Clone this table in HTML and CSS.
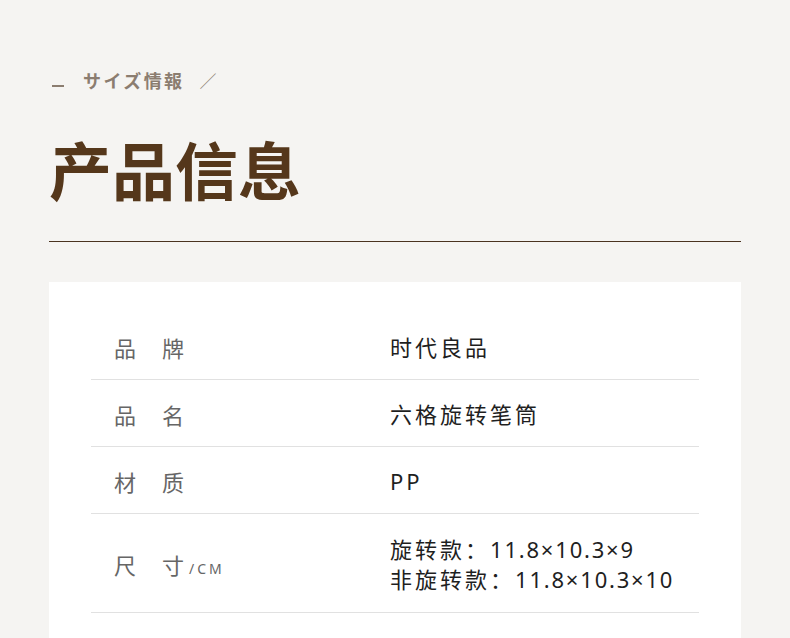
FILE: index.html
```html
<!DOCTYPE html>
<html lang="zh">
<head>
<meta charset="utf-8">
<link rel="stylesheet" href="styles.css">
</head>
<body>
<div class="page">
  <div class="kicker"><span class="dash"></span><span class="kicker-text">サイズ情報</span><span class="slash">／</span></div>
  <h1 class="title">产品信息</h1>
  <div class="rule"></div>
  <div class="card">
    <div class="row"><div class="label"><span>品</span><span>牌</span></div><div class="value">时代良品</div></div>
    <div class="row"><div class="label"><span>品</span><span>名</span></div><div class="value">六格旋转笔筒</div></div>
    <div class="row"><div class="label"><span>材</span><span>质</span></div><div class="value">PP</div></div>
    <div class="row tall"><div class="label"><span>尺</span><span>寸</span><span class="unit">/CM</span></div><div class="value"><div>旋转款：<span class="num">11.8×10.3×9</span></div><div>非旋转款：<span class="num">11.8×10.3×10</span></div></div></div>
  </div>
</div>
</body>
</html>
```
FILE: styles.css
```css
html, body { margin: 0; padding: 0; }
body {
  background: #f5f4f2;
  font-family: "Noto Sans CJK SC", "Noto Sans", sans-serif;
  width: 790px;
  height: 638px;
  overflow: hidden;
}
.page { padding: 0 49px; }
.kicker {
  display: flex;
  align-items: center;
  height: 30px;
  margin-top: 65px;
  color: #8b7d70;
}
.dash {
  display: inline-block;
  width: 12px;
  height: 2px;
  background: #8b7d70;
  margin: 12px 0 0 3px;
}
.kicker-text {
  font-size: 18px;
  font-weight: 700;
  letter-spacing: 2.4px;
  margin-left: 19px;
}
.slash {
  font-size: 17px;
  font-weight: 300;
  margin-left: 15px;
}
.title {
  margin: 30px 0 0 0;
  font-size: 63px;
  line-height: 86px;
  font-weight: 700;
  color: #55371b;
  letter-spacing: 0;
}
.rule {
  margin-top: 30px;
  height: 1px;
  background: #4a3320;
}
.card {
  margin-top: 40px;
  background: #fff;
  padding: 31px 42px 40px;
}
.row {
  display: flex;
  align-items: center;
  box-sizing: border-box;
  height: 67px;
  border-bottom: 1px solid #e1e1e1;
}
.row.tall { height: 99px; }
.label {
  display: flex;
  align-items: baseline;
  gap: 26px;
  width: 299px;
  padding-left: 23px;
  box-sizing: border-box;
  font-size: 22px;
  color: #666;
  padding-top: 2px;
}
.label .unit {
  font-family: "Noto Sans", sans-serif;
  font-size: 14px;
  letter-spacing: 3px;
  margin-left: -21px;
}
.value {
  font-family: "Noto Sans", "Noto Sans CJK SC", sans-serif;
  font-size: 22px;
  color: #1f1f1f;
  letter-spacing: 3px;
  line-height: 30px;
  padding-top: 1px;
}
.value .num { letter-spacing: 1.8px; }
```
